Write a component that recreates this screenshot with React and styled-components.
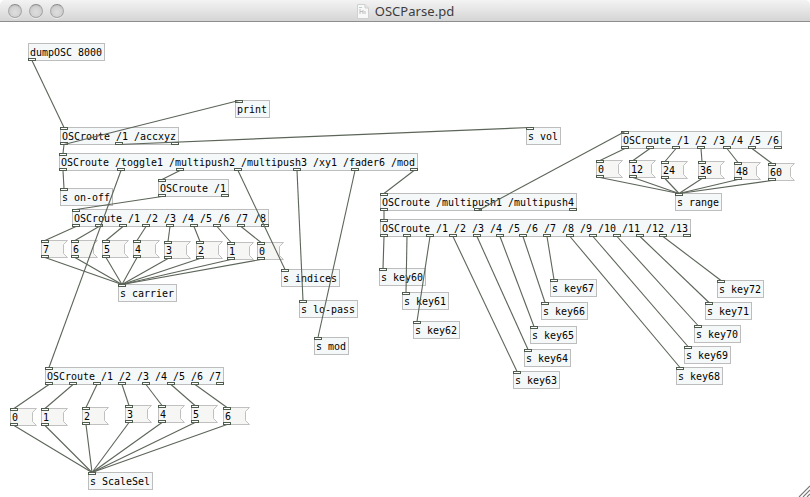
import React from "react";
import styled, { createGlobalStyle, css } from "styled-components";

const GlobalStyle = createGlobalStyle`
  html, body { margin: 0; padding: 0; background: #fff; overflow: hidden; }
`;

const Window = styled.div`
  width: 810px;
  height: 497px;
  display: flex;
  flex-direction: column;
  background: #fff;
  overflow: hidden;
`;

const TitleBar = styled.header`
  box-sizing: border-box;
  flex: none;
  height: 22px;
  display: grid;
  grid-template-columns: 72px 1fr 72px;
  align-items: center;
  background: linear-gradient(#f3f3f3, #e6e6e6 45%, #d5d5d5);
  border-bottom: 1px solid #8e8e8e;
  border-radius: 5px 5px 0 0;
`;

const Controls = styled.div`
  display: flex;
  gap: 7px;
  padding-left: 8px;
`;

const ControlButton = styled.button`
  box-sizing: border-box;
  width: 14px;
  height: 14px;
  padding: 0;
  border: 1px solid #a6a6a6;
  border-top-color: #8c8c8c;
  border-radius: 50%;
  background: radial-gradient(circle at 50% 60%, #dedede 0%, #d2d2d2 50%, #b9b9b9 100%);
  box-shadow: 0 1px 0 rgba(255, 255, 255, 0.5);
`;

const Title = styled.div`
  display: flex;
  align-items: center;
  justify-content: center;
  gap: 6px;
  padding: 1px 0 0 1px;
`;

const TitleText = styled.span`
  font: 13px/18px "Noto Sans", "Open Sans", sans-serif;
  color: #3c3c3c;
  letter-spacing: 0.05px;
  white-space: pre;
`;

const Canvas = styled.main`
  position: relative;
  flex: 1;
`;

const Wires = styled.svg`
  position: absolute;
  left: 0;
  top: 0;
  pointer-events: none;
`;

const Grip = styled.svg`
  position: absolute;
  right: 0;
  bottom: 0;
`;

const placed = css`
  box-sizing: border-box;
  position: absolute;
  left: ${(p) => p.$x}px;
  top: ${(p) => p.$y - 22}px;
  width: ${(p) => p.$w}px;
  height: 18px;
`;

const ObjectBox = styled.div`
  ${placed}
  border: 1px solid #bdbdbd;
  background: #f5f8f8;
`;

const MessageBox = styled.div`
  ${placed}
`;

const MessageShape = styled.svg`
  position: absolute;
  left: 0;
  top: 0;
`;

const Label = styled.span`
  position: absolute;
  left: ${(p) => p.$left}px;
  top: ${(p) => p.$top}px;
  font: 11px/14px "DejaVu Sans Mono", monospace;
  color: #000;
  white-space: pre;
  transform: scaleX(0.906);
  transform-origin: 0 0;
`;

const CHAR = 6;
const PORT = 8;

const object = (id, x, y, text, outlets = 0, inlet = true) => ({
  id, x, y, text, outlets, inlet, kind: "object", w: text.length * CHAR + 5,
});
const message = (id, x, y, text) => ({
  id, x, y, text, outlets: 1, inlet: true, kind: "message", w: 27,
});

const nodes = [
  object("dump", 28, 43, "dumpOSC 8000", 1, false),
  object("print", 235, 100, "print"),
  object("acc", 60, 127, "OSCroute /1 /accxyz", 3),
  object("vol", 526, 127, "s vol"),
  object("main", 59, 153, "OSCroute /toggle1 /multipush2 /multipush3 /xy1 /fader6 /mod", 7),
  object("onoff", 60, 188, "s on-off"),
  object("one", 158, 179, "OSCroute /1", 2),
  object("carrierRoute", 72, 209, "OSCroute /1 /2 /3 /4 /5 /6 /7 /8", 9),
  message("c0", 41, 240, "7"),
  message("c1", 71, 240, "6"),
  message("c2", 102, 240, "5"),
  message("c3", 133, 240, "4"),
  message("c4", 164, 241, "3"),
  message("c5", 196, 241, "2"),
  message("c6", 227, 242, "1"),
  message("c7", 257, 242, "0"),
  object("carrier", 118, 284, "s carrier"),
  object("indices", 281, 269, "s indices"),
  object("lopass", 299, 300, "s lo-pass"),
  object("mod", 314, 337, "s mod"),
  object("multi", 380, 193, "OSCroute /multipush1 /multipush4", 3),
  object("keys", 380, 219, "OSCroute /1 /2 /3 /4 /5 /6 /7 /8 /9 /10 /11 /12 /13", 14),
  object("k0", 379, 268, "s key60"),
  object("k1", 402, 292, "s key61"),
  object("k2", 413, 321, "s key62"),
  object("k3", 513, 371, "s key63"),
  object("k4", 524, 349, "s key64"),
  object("k5", 530, 326, "s key65"),
  object("k6", 541, 302, "s key66"),
  object("k7", 550, 279, "s key67"),
  object("k8", 676, 367, "s key68"),
  object("k9", 684, 346, "s key69"),
  object("k10", 694, 325, "s key70"),
  object("k11", 705, 302, "s key71"),
  object("k12", 717, 280, "s key72"),
  object("rangeRoute", 621, 131, "OSCroute /1 /2 /3 /4 /5 /6", 7),
  message("r0", 596, 160, "0"),
  message("r1", 629, 160, "12"),
  message("r2", 661, 161, "24"),
  message("r3", 698, 161, "36"),
  message("r4", 734, 162, "48"),
  message("r5", 768, 163, "60"),
  object("range", 675, 193, "s range"),
  object("scaleRoute", 45, 367, "OSCroute /1 /2 /3 /4 /5 /6 /7", 8),
  message("s0", 10, 408, "0"),
  message("s1", 41, 408, "1"),
  message("s2", 82, 407, "2"),
  message("s3", 125, 405, "3"),
  message("s4", 158, 405, "4"),
  message("s5", 191, 405, "5"),
  message("s6", 223, 407, "6"),
  object("scaleSel", 88, 472, "s ScaleSel"),
];

const byId = Object.fromEntries(nodes.map((n) => [n.id, n]));

const fan = (route, prefix, count, sink) =>
  Array.from({ length: count }).flatMap((_, i) => [
    [route, i, prefix + i],
    ...(sink ? [[prefix + i, 0, sink]] : []),
  ]);

const wires = [
  ["dump", 0, "acc"],
  ["acc", 0, "print"],
  ["acc", 0, "main"],
  ["acc", 1, "vol"],
  ["main", 0, "onoff"],
  ["main", 1, "scaleRoute"],
  ["main", 2, "one"],
  ["main", 3, "indices"],
  ["main", 4, "lopass"],
  ["main", 5, "mod"],
  ["main", 6, "multi"],
  ["one", 0, "carrierRoute"],
  ["multi", 0, "keys"],
  ["multi", 1, "rangeRoute"],
  ...fan("carrierRoute", "c", 8, "carrier"),
  ...fan("keys", "k", 13),
  ...fan("rangeRoute", "r", 6, "range"),
  ...fan("scaleRoute", "s", 7, "scaleSel"),
];

const outletX = (n, i) =>
  n.kind === "message" || n.outlets < 2
    ? n.x
    : n.x + Math.floor(((n.w - PORT) * i) / (n.outlets - 1));

function Port({ x, y }) {
  return <rect x={x + 0.5} y={y + 0.5} width={PORT - 1} height={2} fill="#fff" stroke="#4f5d4f" />;
}

function PatchNode({ node }) {
  if (node.kind === "message") {
    return (
      <MessageBox $x={node.x} $y={node.y} $w={node.w}>
        <MessageShape width="27" height="18">
          <path d="M.5 .5H26.5L22.5 4.5V13.5L26.5 17.5H.5Z" fill="#f6f6f5" stroke="#c0c0c0" />
        </MessageShape>
        <Label $left={2} $top={3}>{node.text}</Label>
      </MessageBox>
    );
  }
  return (
    <ObjectBox $x={node.x} $y={node.y} $w={node.w}>
      <Label $left={1} $top={2}>{node.text}</Label>
    </ObjectBox>
  );
}

export default function App() {
  return (
    <>
      <GlobalStyle />
      <Window>
        <TitleBar>
          <Controls>
            <ControlButton aria-label="Close" />
            <ControlButton aria-label="Minimize" />
            <ControlButton aria-label="Zoom" />
          </Controls>
          <Title>
            <svg width="12" height="15" viewBox="0 0 12 15">
              <path d="M.5 .5H8L11.5 4V14.5H.5Z" fill="#f8f8f8" stroke="#d0d0d0" />
              <path d="M8 .5V4H11.5" fill="#e4e4e4" stroke="#d0d0d0" />
              <path d="M3 5V10M3 7.5H6M6 6V10M8 7V10" stroke="#bcbcbc" fill="none" />
              <path d="M2 3.5H5" stroke="#b9d3bd" />
            </svg>
            <TitleText>OSCParse.pd</TitleText>
          </Title>
        </TitleBar>
        <Canvas>
          {nodes.map((n) => (
            <PatchNode key={n.id} node={n} />
          ))}
          <Wires width="810" height="475" viewBox="0 22 810 475">
            {nodes.map((n) => (
              <g key={n.id}>
                {n.inlet && <Port x={n.x} y={n.y} />}
                {Array.from({ length: n.outlets }, (_, i) => (
                  <Port key={i} x={outletX(n, i)} y={n.y + 15} />
                ))}
              </g>
            ))}
            {wires.map(([from, outlet, to]) => (
              <line
                key={`${from}-${outlet}-${to}`}
                x1={outletX(byId[from], outlet) + 4}
                y1={byId[from].y + 17.5}
                x2={byId[to].x + 4}
                y2={byId[to].y + 0.5}
                stroke="#5c6559"
                strokeWidth="1.1"
              />
            ))}
          </Wires>
          <Grip width="13" height="13" viewBox="0 0 13 13">
            <path d="M2 13L13 2M6 13L13 6M10 13L13 10" stroke="#777" strokeWidth="1.1" />
          </Grip>
        </Canvas>
      </Window>
    </>
  );
}
